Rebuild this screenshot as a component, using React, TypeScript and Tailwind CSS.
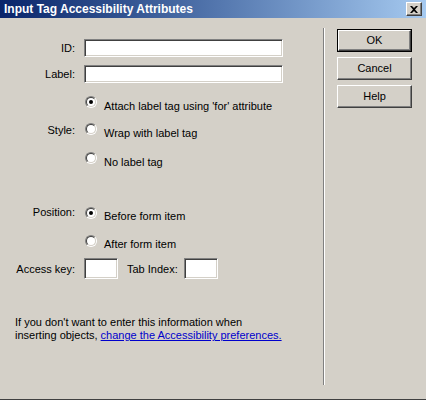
import React from "react";

const font = { fontFamily: '"Liberation Sans", Arial, sans-serif' };

function Radio({ checked }: { checked?: boolean }) {
  return (
    <div className="relative w-[12px] h-[12px] shrink-0 rounded-full border border-t-[#808080] border-l-[#808080] border-b-white border-r-white">
      <div className="absolute inset-0 rounded-full bg-white border border-t-[#404040] border-l-[#404040] border-b-[#d4d0c8] border-r-[#d4d0c8] flex items-center justify-center">
        {checked && <div className="w-[4px] h-[4px] rounded-full bg-black" />}
      </div>
    </div>
  );
}

function Field({ w, h }: { w: number; h: number }) {
  return (
    <div
      className="bg-white border border-t-[#808080] border-l-[#808080] border-b-white border-r-white shadow-[inset_1px_1px_0_#404040,inset_-1px_-1px_0_#d4d0c8]"
      style={{ width: w, height: h }}
    />
  );
}

function Button({ label, def }: { label: string; def?: boolean }) {
  const inner = (
    <div className="flex-1 flex items-center justify-center bg-[#d4d0c8] border border-t-white border-l-white border-b-[#404040] border-r-[#404040] shadow-[inset_-1px_-1px_0_#808080] text-[11px] text-black">
      {label}
    </div>
  );
  return def ? (
    <div className="w-[75px] h-[23px] border border-black flex">{inner}</div>
  ) : (
    <div className="w-[75px] h-[23px] flex">{inner}</div>
  );
}

export default function App() {
  return (
    <div
      className="w-[426px] h-[400px] bg-[#d4d0c8] flex flex-col text-[11px] text-black overflow-hidden border-b border-b-[#404040]"
      style={font}
    >
      {/* Title bar */}
      <div className="h-[18px] shrink-0 bg-gradient-to-r from-[#0a246a] to-[#a6caf0] flex items-center pl-[4px] pr-[4px]">
        <span className="text-white font-bold text-[12px] leading-none flex-1">
          Input Tag Accessibility Attributes
        </span>
        <div className="w-[16px] h-[14px] flex border border-t-white border-l-white border-b-[#404040] border-r-[#404040] bg-[#d4d0c8] shadow-[inset_-1px_-1px_0_#808080] items-center justify-center">
          <svg width="8" height="7" viewBox="0 0 8 7">
            <path d="M0 0h2l2 2 2-2h2L5 3.5 8 7H6L4 5 2 7H0l3-3.5z" fill="#000" />
          </svg>
        </div>
      </div>

      {/* Body */}
      <div className="flex flex-1">
        {/* Left form */}
        <div className="w-[323px] shrink-0 flex flex-col pt-[21px]">
          <div className="flex items-center h-[18px]">
            <div className="w-[75px] text-right">ID:</div>
            <div className="ml-[9px]">
              <Field w={199} h={18} />
            </div>
          </div>
          <div className="flex items-center h-[18px] mt-[8px]">
            <div className="w-[75px] text-right">Label:</div>
            <div className="ml-[9px]">
              <Field w={199} h={18} />
            </div>
          </div>

          {/* Style group */}
          <div className="flex items-start h-[12px] mt-[13px]">
            <div className="w-[75px]" />
            <div className="ml-[10px]"><Radio checked /></div>
            <div className="ml-[7px] pt-[3px] leading-[14px] whitespace-nowrap">Attach label tag using 'for' attribute</div>
          </div>
          <div className="flex items-start h-[12px] mt-[15px]">
            <div className="w-[75px] text-right leading-[14px]">Style:</div>
            <div className="ml-[10px]"><Radio /></div>
            <div className="ml-[7px] pt-[3px] leading-[14px] whitespace-nowrap">Wrap with label tag</div>
          </div>
          <div className="flex items-start h-[12px] mt-[17px]">
            <div className="w-[75px]" />
            <div className="ml-[10px]"><Radio /></div>
            <div className="ml-[7px] pt-[3px] leading-[14px] whitespace-nowrap">No label tag</div>
          </div>

          {/* Position group */}
          <div className="flex items-start h-[12px] mt-[43px]">
            <div className="w-[75px] text-right leading-[14px] -mt-[2px]">Position:</div>
            <div className="ml-[10px]"><Radio checked /></div>
            <div className="ml-[7px] pt-[2px] leading-[14px] whitespace-nowrap">Before form item</div>
          </div>
          <div className="flex items-start h-[12px] mt-[16px]">
            <div className="w-[75px]" />
            <div className="ml-[10px]"><Radio /></div>
            <div className="ml-[7px] pt-[2px] leading-[14px] whitespace-nowrap">After form item</div>
          </div>

          {/* Access key row */}
          <div className="flex items-center mt-[11px] h-[21px]">
            <div className="w-[75px] text-right pt-[2px]">Access key:</div>
            <div className="ml-[9px]"><Field w={34} h={21} /></div>
            <div className="ml-[9px] pt-[2px]">Tab Index:</div>
            <div className="ml-[6px]"><Field w={34} h={21} /></div>
          </div>

          {/* Info text */}
          <div className="mt-[37px] pl-[15px] leading-[13px]">
            <div>If you don't want to enter this information when</div>
            <div>
              inserting objects,{" "}
              <span className="text-[#0000cc] underline">change the Accessibility preferences.</span>
            </div>
          </div>
        </div>

        {/* Separator */}
        <div className="w-[2px] h-[357px] mt-[10px] border-l border-l-[#808080] border-r border-r-white" />

        {/* Buttons */}
        <div className="flex flex-col gap-[5px] pt-[11px] pl-[12px]">
          <Button label="OK" def />
          <Button label="Cancel" />
          <Button label="Help" />
        </div>
      </div>
    </div>
  );
}
